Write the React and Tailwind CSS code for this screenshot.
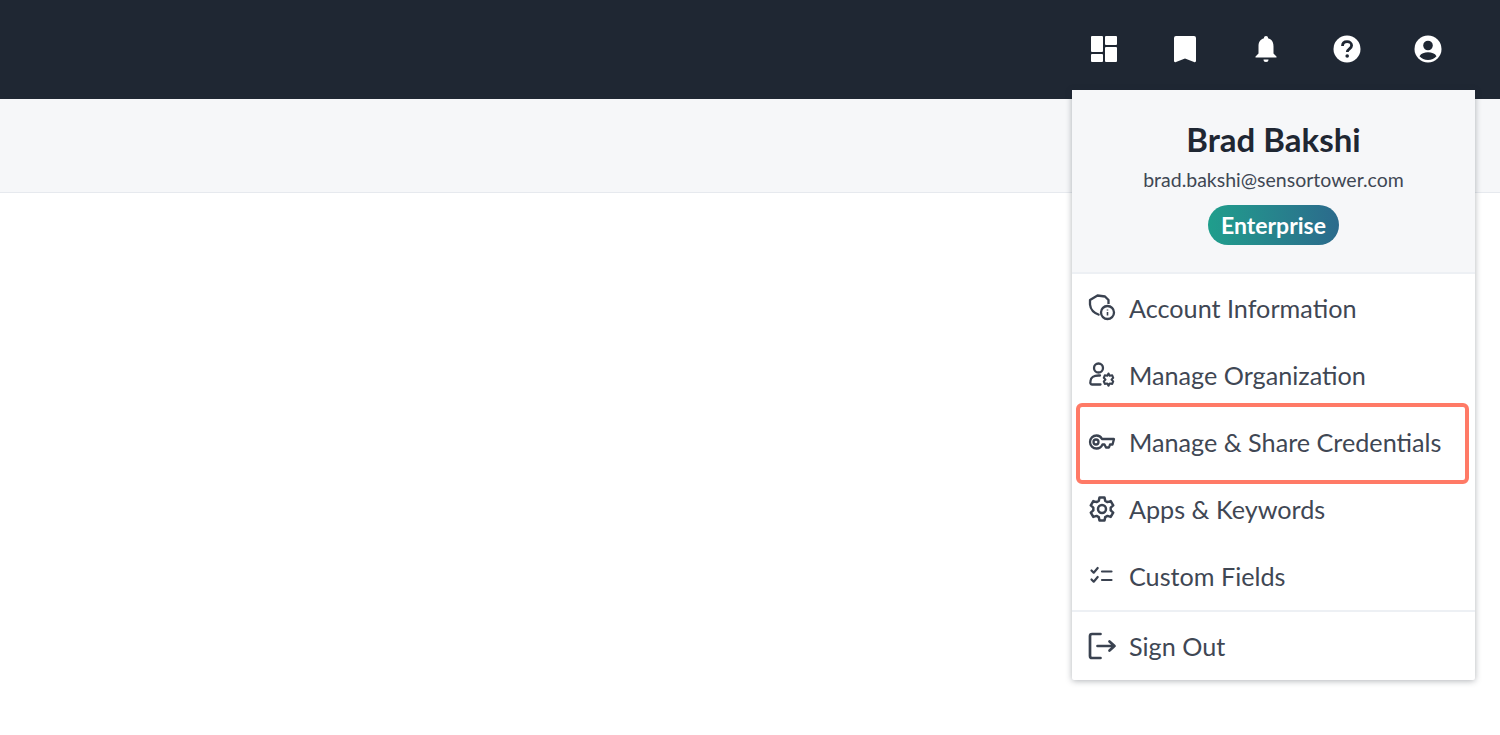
const iconClass = "w-[30px] h-[30px] shrink-0 text-[#3a4250]";

function ShieldInfoIcon() {
  return (
    <svg viewBox="0 0 30 30" fill="none" stroke="currentColor" strokeWidth="2.300" strokeLinejoin="round" className={iconClass}>
      <path d="M12.500 22 C8 20.500 3.500 17 3 11.500 L3 7 L10.500 2.500 L18 3.500 L21.500 7 L21.500 11" />
      <circle cx="20.500" cy="19.500" r="6.500" />
      <path d="M20.500 16.500v1M20.500 19v3.500" strokeWidth="1.600" />
    </svg>
  );
}

function UserCogIcon() {
  return (
    <svg viewBox="0 0 30 30" fill="none" stroke="currentColor" strokeWidth="2.300" strokeLinecap="round" className={iconClass}>
      <circle cx="11.500" cy="8" r="4.500" />
      <path d="M3.500 21c0-3.500 3.500-5.500 8-5.500h1.500M3.500 21.500c-.5 1.500 0 3 1.500 3h8.500" />
      <path d="M21.500 13.500l1.200 2.200 2.500-.4 1 2.500-1.700 1.800 1.700 1.800-1 2.500-2.500-.4-1.200 2.200-1.200-2.200-2.500.4-1-2.500 1.700-1.800-1.700-1.800 1-2.500 2.500.4z" strokeWidth="2.100" strokeLinejoin="round" />
    </svg>
  );
}

function KeyIcon() {
  return (
    <svg viewBox="0 0 30 30" fill="none" stroke="currentColor" strokeWidth="2.300" strokeLinejoin="round" className={iconClass}>
      <path d="M9.500 8.500a6.500 6.500 0 1 0 0 13c3 0 5-1.700 6-4h2l1.500 3h3l1-3h2.500l1.500-5.500h-12c-1-2-3-3.500-5.500-3.500z" />
      <circle cx="9" cy="15" r="2.500" />
    </svg>
  );
}

function GearIcon() {
  return (
    <svg viewBox="0 0 30 30" fill="none" stroke="currentColor" strokeWidth="2.500" strokeLinejoin="round" className={iconClass}>
      <path d="M12.500 3.500h5l.7 3.300 2.300 1.300 3.200-1 2.500 4.300-2.500 2.200v2.800l2.500 2.200-2.500 4.300-3.200-1-2.300 1.300-.7 3.300h-5l-.7-3.300-2.300-1.300-3.200 1-2.500-4.300 2.500-2.200v-2.800l-2.500-2.200 2.500-4.300 3.200 1 2.300-1.300z" />
      <circle cx="15" cy="15" r="4" />
    </svg>
  );
}

function ChecklistIcon() {
  return (
    <svg viewBox="0 0 30 30" fill="none" stroke="currentColor" strokeWidth="2.200" strokeLinecap="round" strokeLinejoin="round" className={iconClass}>
      <path d="M4.500 9.500l2.200 2.200 4-4.700M4.500 18.500l2.200 2.200 4-4.700" />
      <path d="M15 10.500h9.500M15 19h9.500" />
    </svg>
  );
}

function SignOutIcon() {
  return (
    <svg viewBox="0 0 30 30" fill="none" stroke="currentColor" strokeWidth="2.700" strokeLinecap="round" strokeLinejoin="round" className={iconClass}>
      <path d="M13.500 3H5a2 2 0 0 0-2 2v20a2 2 0 0 0 2 2h8.500" />
      <path d="M10.500 15h17M22.500 10.500l5 4.500-5 4.500" />
    </svg>
  );
}

const menuItems = [
  { label: "Account Information", Icon: ShieldInfoIcon },
  { label: "Manage Organization", Icon: UserCogIcon },
  { label: "Manage & Share Credentials", Icon: KeyIcon },
  { label: "Apps & Keywords", Icon: GearIcon },
  { label: "Custom Fields", Icon: ChecklistIcon },
];

function MenuRow({ label, Icon, className }) {
  return (
    <a className={`flex items-center gap-[12px] pl-[15px] text-[25.2px] text-[#3f4754] ${className}`}>
      <Icon />
      <span className="relative top-[1px]">{label}</span>
    </a>
  );
}

export default function App() {
  return (
    <div className="relative h-[735px] overflow-hidden bg-white font-['Lato','Noto_Sans',sans-serif]">
      <nav className="flex h-[99px] items-center justify-end gap-[51px] bg-[#1f2733] pb-[1px] pr-[57px] text-white">
        <svg viewBox="0 0 30 30" fill="currentColor" className="h-[30px] w-[30px]">
          <rect x="2" y="2" width="12" height="16" rx="1" />
          <rect x="16" y="2" width="12" height="9" rx="1" />
          <rect x="16" y="13" width="12" height="15" rx="1" />
          <rect x="2" y="20" width="12" height="8" rx="1" />
        </svg>
        <svg viewBox="0 0 30 30" fill="currentColor" className="h-[30px] w-[30px]">
          <path d="M4 4a2 2 0 0 1 2-2h18a2 2 0 0 1 2 2v23c0 1-1 1.500-2 1l-9-3.500L6 28c-1 .5-2 0-2-1z" />
        </svg>
        <svg viewBox="0 0 30 30" fill="currentColor" className="h-[30px] w-[30px]">
          <path d="M15 2a2 2 0 0 1 2 2.300c4 1 5.500 4.200 5.500 8.200v7l3 3v1h-21v-1l3-3v-7c0-4 1.500-7.200 5.500-8.200A2 2 0 0 1 15 2zM12.500 25.500h5a2.500 2.500 0 0 1-5 0z" />
        </svg>
        <svg viewBox="0 0 30 30" className="h-[30px] w-[30px]">
          <circle cx="15" cy="15" r="13.500" fill="currentColor" />
          <path d="M10.500 12c0-2.800 2-4.300 4.600-4.300s4.500 1.500 4.500 3.800c0 3.300-4.300 3.300-4.300 6.500" fill="none" stroke="#1f2733" strokeWidth="2.800" />
          <circle cx="15.200" cy="22" r="1.800" fill="#1f2733" />
        </svg>
        <svg viewBox="0 0 30 30" className="h-[30px] w-[30px]">
          <circle cx="15" cy="15" r="13.500" fill="currentColor" />
          <circle cx="15" cy="11.500" r="4.800" fill="#1f2733" />
          <path d="M6.500 22.300c1.500-3 5-4 8.500-4s7 1 8.500 4c-2 2.300-5 3.700-8.500 3.700s-6.500-1.400-8.500-3.700z" fill="#1f2733" />
        </svg>
      </nav>

      <div className="h-[94px] border-b border-[#e6e9ee] bg-[#f6f7f9]" />

      <div className="absolute left-[1072px] top-[90px] w-[403px] rounded-[2px] bg-white shadow-[0_1px_6px_rgba(31,39,51,0.35)]">
        <div className="flex h-[184px] flex-col items-center border-b-2 border-[#edf0f4] bg-[#f6f7f9] pt-[29px]">
          <div className="text-[33px] font-bold leading-[40px] text-[#1f2733]">Brad Bakshi</div>
          <div className="mt-[9px] text-[19.500px] leading-[24px] text-[#3f4754]">brad.bakshi@sensortower.com</div>
          <div className="mt-[13px] flex h-[40px] w-[131px] items-center justify-center rounded-full bg-gradient-to-r from-[#1f9e8c] to-[#2b6a8c] text-[23px] font-bold text-white">
            Enterprise
          </div>
        </div>
        <div className="flex flex-col">
          {menuItems.map((item) => (
            <MenuRow key={item.label} label={item.label} Icon={item.Icon} className="h-[67.2px]" />
          ))}
        </div>
        <MenuRow label="Sign Out" Icon={SignOutIcon} className="h-[70px] border-t-2 border-[#edf0f4]" />
        <div className="absolute left-[4px] top-[313px] h-[81px] w-[393px] rounded-[6px] border-4 border-[#ff7a66]" />
      </div>
    </div>
  );
}
